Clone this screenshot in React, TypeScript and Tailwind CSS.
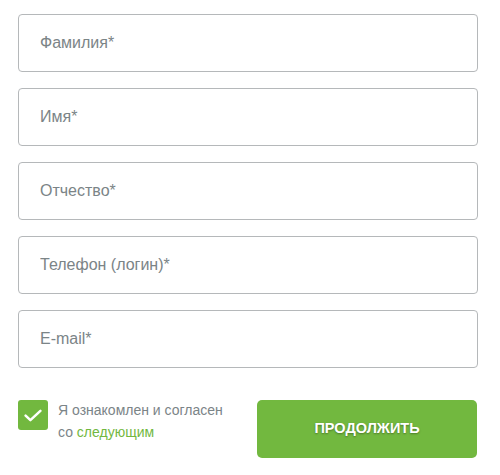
const fields = ["Фамилия*", "Имя*", "Отчество*", "Телефон (логин)*", "E-mail*"];

export default function App() {
  return (
    <div className="w-[500px] h-[475px] bg-white px-[18px] pt-[14px] font-['Liberation_Sans',Arial,sans-serif]">
      <div className="flex flex-col gap-4 w-[460px]">
        {fields.map((f) => (
          <input
            key={f}
            placeholder={f}
            className="h-[58px] w-full rounded-[4px] border border-[#b5b8ba] px-[21px] text-[16px] text-[#333] placeholder:text-[#7b8487] outline-none"
          />
        ))}
      </div>

      <div className="flex items-start justify-between w-[459px] mt-[32px]">
        <label className="flex items-start gap-[10px]">
          <span className="flex items-center justify-center w-[30px] h-[30px] rounded-[3px] bg-[#72b83f] shrink-0">
            <svg width="18" height="13" viewBox="0 0 18 13" fill="none">
              <path d="M1.6 6.6 L6.4 11.2 L16.4 1.8" stroke="#fff" strokeWidth="2.5" strokeLinecap="round" strokeLinejoin="round" />
            </svg>
          </span>
          <span className="text-[14px] leading-[22px] text-[#7b8487] -mt-[1px]">
            Я ознакомлен и согласен
            <br />
            со <a className="text-[#72b83f]">следующим</a>
          </span>
        </label>
        <button className="w-[220px] h-[58px] rounded-[5px] bg-[#72b83f] text-white text-[14.5px] font-bold uppercase [text-shadow:0_1px_2px_rgba(0,0,0,0.35)]">
          Продолжить
        </button>
      </div>
    </div>
  );
}
